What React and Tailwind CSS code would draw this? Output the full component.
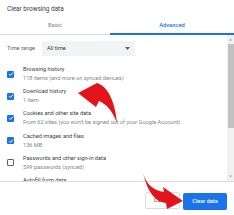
import React from 'react';

const rows = [
  { title: 'Browsing history', sub: '118 items (and more on synced devices)', checked: true },
  { title: 'Download history', sub: '1 item', checked: true },
  { title: 'Cookies and other site data', sub: "From 62 sites (you won't be signed out of your Google Account)", checked: true },
  { title: 'Cached images and files', sub: '136 MB', checked: true },
  { title: 'Passwords and other sign-in data', sub: '599 passwords (synced)', checked: false },
  { title: 'Autofill form data', sub: '', checked: false },
];

const Checkbox = ({ checked }) =>
  checked ? (
    <div className="w-[7px] h-[7px] rounded-[1px] bg-[#1a73e8] flex items-center justify-center shrink-0">
      <svg width="6" height="6" viewBox="0 0 12 12">
        <path d="M2 6.2 L4.8 9 L10 3.2" fill="none" stroke="white" strokeWidth="2" />
      </svg>
    </div>
  ) : (
    <div className="w-[7px] h-[7px] rounded-[1px] border border-[#5f6368] shrink-0" />
  );

const App = () => {
  return (
    <div className="relative w-[234px] h-[215px] overflow-hidden bg-white font-['Roboto',sans-serif] text-[#3c4043]">
      <div className="h-[17px] pl-[7px] pt-[5px] text-[6.4px] leading-[9px] text-[#3c4043]">Clear browsing data</div>

      <div className="flex h-[18px] text-[5.8px]">
        <div className="w-[110px] flex items-center justify-center border-b border-[#dadce0] text-[#80868b]">Basic</div>
        <div className="flex-1 flex items-center justify-center border-b-2 border-[#1a73e8] text-[#1a73e8] font-medium">Advanced</div>
      </div>

      <div className="flex h-[147px] border-b border-[#dadce0]">
        <div className="flex-1 overflow-hidden">
          <div className="flex items-center mt-[6px] h-[15px] text-[5.6px]">
            <div className="w-[42px] pl-[7px] text-[#5f6368]">Time range</div>
            <div className="w-[93px] h-[15px] bg-[#f1f3f4] flex items-center justify-between px-[5px] text-[#3c4043]">
              <span>All time</span>
              <svg width="5" height="3" viewBox="0 0 10 6">
                <path d="M0 0 L10 0 L5 6 Z" fill="#5f6368" />
              </svg>
            </div>
          </div>

          <div className="mt-[7px] flex flex-col">
            {rows.map((r) => (
              <div key={r.title} className="flex items-center h-[22.2px] pl-[7px] shrink-0">
                <Checkbox checked={r.checked} />
                <div className="ml-[9px] flex flex-col text-[5.6px] leading-[9px]">
                  <span className="text-[#3c4043]">{r.title}</span>
                  <span className="text-[#80868b]">{r.sub || '\u00a0'}</span>
                </div>
              </div>
            ))}
          </div>
        </div>

        <div className="w-[7px] bg-[#f1f1f1] flex flex-col items-center">
          <svg width="5" height="9" viewBox="0 0 10 18" className="shrink-0">
            <path d="M2 11 L8 11 L5 7 Z" fill="#a3a3a3" />
          </svg>
          <div className="w-[6px] h-[84px] bg-[#c1c1c1]" />
          <div className="flex-1" />
          <svg width="5" height="9" viewBox="0 0 10 18" className="shrink-0">
            <path d="M2 7 L8 7 L5 11 Z" fill="#a3a3a3" />
          </svg>
        </div>
      </div>

      <div className="flex justify-end gap-[3px] pr-[7px] pt-[10px] text-[5.6px] font-medium">
        <button className="w-[35px] h-[17px] rounded-[2px] border border-[#dadce0] text-[#5f6368] bg-white">Cancel</button>
        <button className="w-[44px] h-[17px] mt-[1px] rounded-[2px] bg-[#1a73e8] text-white">Clear data</button>
      </div>

      <svg className="absolute inset-0 pointer-events-none" width="234" height="215" viewBox="0 0 234 215">
        <path
          d="M78 93 L97 83 C107 86 115 100 117 123 C112 110 106 104 99 101 L96 107 Z"
          fill="#e3141b"
        />
        <path
          d="M143 173 Q148 190 164 192 L163 187 L183 201 L167 209 L166 203 Q150 202 143 173 Z"
          fill="#e3141b"
        />
      </svg>
    </div>
  );
};

export default App;
